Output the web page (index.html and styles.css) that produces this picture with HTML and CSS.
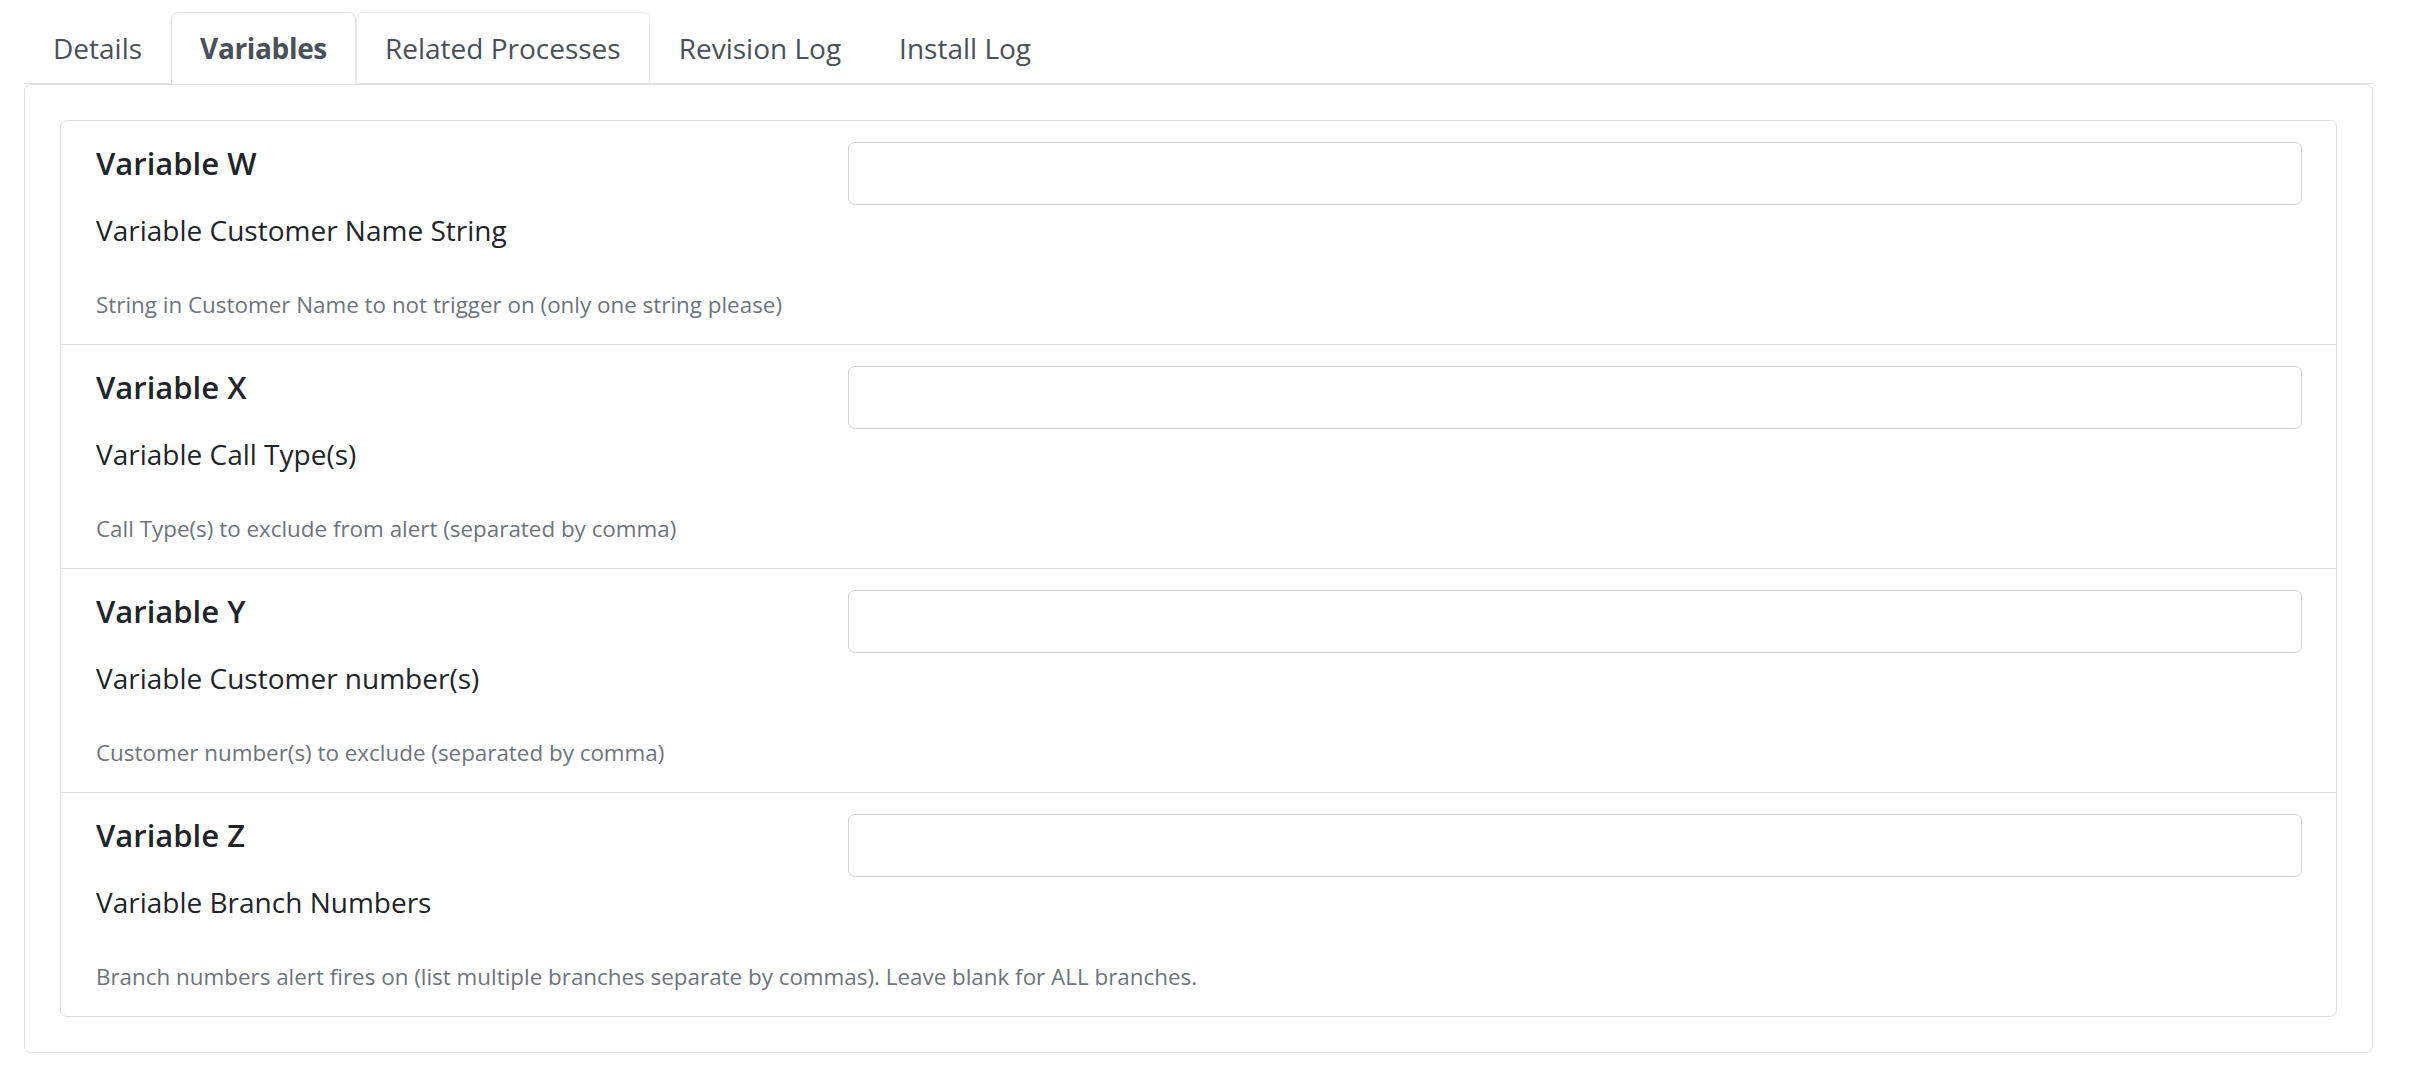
FILE: index.html
```html
<html>

<head>
    <title>process variables</title>

    <link rel="stylesheet" href="styles.css">

</head>

<body>

    <div id="page">
        <ul class="tabs">
            <li><a class="tab">Details</a></li>
            <li><a class="tab active">Variables</a></li>
            <li><a class="tab hover">Related Processes</a></li>
            <li><a class="tab">Revision Log</a></li>
            <li><a class="tab">Install Log</a></li>
        </ul>

        <div class="card">
            <div class="card-body">
                <div class="list">

                    <div class="item">
                        <div class="col-left">
                            <h5>Variable W</h5>
                            <div class="label">Variable Customer Name String</div>
                            <small>String in Customer Name to not trigger on (only one string please)</small>
                        </div>
                        <div class="col-right">
                            <input type="text" class="field">
                        </div>
                    </div>

                    <div class="item">
                        <div class="col-left">
                            <h5>Variable X</h5>
                            <div class="label">Variable Call Type(s)</div>
                            <small>Call Type(s) to exclude from alert (separated by comma)</small>
                        </div>
                        <div class="col-right">
                            <input type="text" class="field">
                        </div>
                    </div>

                    <div class="item">
                        <div class="col-left">
                            <h5>Variable Y</h5>
                            <div class="label">Variable Customer number(s)</div>
                            <small>Customer number(s) to exclude (separated by comma)</small>
                        </div>
                        <div class="col-right">
                            <input type="text" class="field">
                        </div>
                    </div>

                    <div class="item">
                        <div class="col-left">
                            <h5>Variable Z</h5>
                            <div class="label">Variable Branch Numbers</div>
                            <small>Branch numbers alert fires on (list multiple branches separate by commas). Leave blank for ALL branches.</small>
                        </div>
                        <div class="col-right">
                            <input type="text" class="field">
                        </div>
                    </div>

                </div>
            </div>
        </div>
    </div>

</body>

</html>
```

FILE: styles.css
```css
body {
    margin: 0;
    font-family: "Open Sans", sans-serif;
    font-size: 28px;
    line-height: 1.5;
    color: #212529;
    background: #fff;
}

#page {
    padding: 12px 43px 0 24px;
}

.tabs {
    display: flex;
    list-style: none;
    margin: 0;
    padding: 0;
    border-bottom: 1px solid #dee2e6;
}

.tab {
    display: block;
    padding: 14px 28px;
    line-height: 42px;
    color: #495057;
    border: 1px solid transparent;
    border-top-left-radius: 7px;
    border-top-right-radius: 7px;
    margin-bottom: -1px;
}

.tab.active {
    font-weight: 700;
    letter-spacing: -0.35px;
    background: #fff;
    border-color: #dee2e6 #dee2e6 #fff;
}

.tab.hover {
    border-color: #e9ecef #e9ecef #dee2e6;
}

.card {
    border: 1px solid #dfdfdf;
    border-radius: 7px;
}

.card-body {
    padding: 35px;
}

.list {
    border: 1px solid #dfdfdf;
    border-radius: 7px;
}

.item {
    display: flex;
    padding: 21px 34px 22px 35px;
    border-bottom: 1px solid #dfdfdf;
}

.item:last-child {
    border-bottom: none;
}

.col-left {
    width: 701px;
    display: flex;
    flex-direction: column;
    align-items: flex-start;
}

.col-right {
    flex: 1;
    margin-left: 51px;
}

h5 {
    margin: 0 0 25px;
    font-size: 31px;
    font-weight: 600;
    line-height: 42px;
}

.label {
    line-height: 42px;
    margin-bottom: 37px;
}

small {
    font-size: 22.4px;
    line-height: 34px;
    color: #6c757d;
    white-space: nowrap;
}

.field {
    display: block;
    width: 100%;
    height: 63px;
    box-sizing: border-box;
    border: 1px solid #ced4da;
    border-radius: 7px;
    background: #fff;
    font: inherit;
    padding: 10px 21px;
}
```
